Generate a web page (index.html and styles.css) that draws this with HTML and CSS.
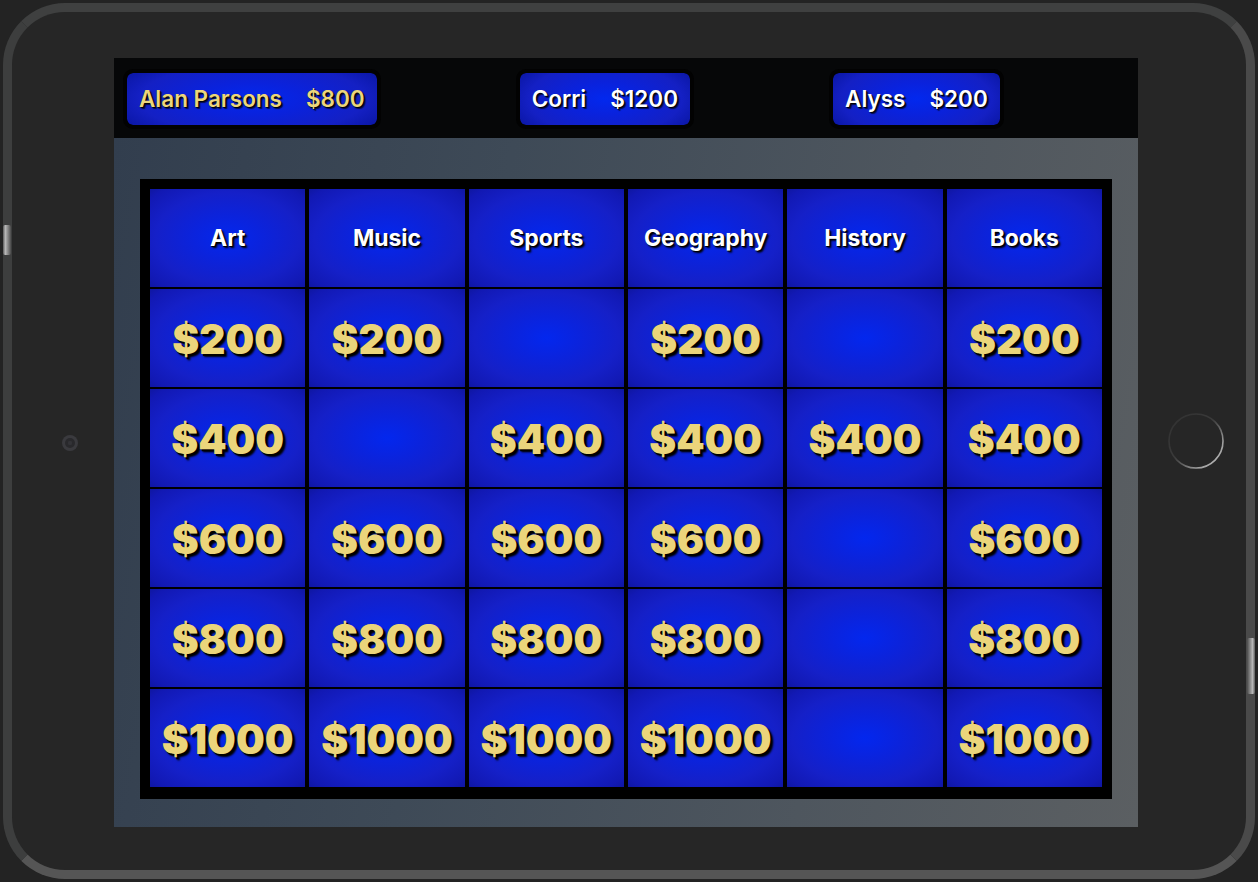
FILE: index.html
```html
<!DOCTYPE html>
<html lang="en">
<head>
<meta charset="utf-8">
<title>Jeopardy Board</title>
<link rel="stylesheet" href="styles.css">
</head>
<body>
<div class="device">
  <span class="side-btn side-btn-left"></span>
  <span class="side-btn side-btn-right"></span>
  <div class="bezel bezel-left">
    <svg class="camera" width="18" height="18" viewBox="0 0 18 18">
      <circle cx="9" cy="9" r="8" fill="#3a3a3e"/>
      <circle cx="9" cy="9" r="5" fill="#29292c"/>
      <circle cx="9" cy="9" r="2.2" fill="#333337"/>
    </svg>
  </div>
  <div class="screen">
    <div class="players">
      <div class="player active"><span class="pname">Alan Parsons</span><span class="pscore">$800</span></div>
      <div class="player"><span class="pname">Corri</span><span class="pscore">$1200</span></div>
      <div class="player"><span class="pname">Alyss</span><span class="pscore">$200</span></div>
    </div>
    <div class="stage">
      <div class="board">
        <div class="cell cat">Art</div>
        <div class="cell cat">Music</div>
        <div class="cell cat">Sports</div>
        <div class="cell cat">Geography</div>
        <div class="cell cat">History</div>
        <div class="cell cat">Books</div>

        <div class="cell money">$200</div>
        <div class="cell money">$200</div>
        <div class="cell money"></div>
        <div class="cell money">$200</div>
        <div class="cell money"></div>
        <div class="cell money">$200</div>

        <div class="cell money">$400</div>
        <div class="cell money"></div>
        <div class="cell money">$400</div>
        <div class="cell money">$400</div>
        <div class="cell money">$400</div>
        <div class="cell money">$400</div>

        <div class="cell money">$600</div>
        <div class="cell money">$600</div>
        <div class="cell money">$600</div>
        <div class="cell money">$600</div>
        <div class="cell money"></div>
        <div class="cell money">$600</div>

        <div class="cell money">$800</div>
        <div class="cell money">$800</div>
        <div class="cell money">$800</div>
        <div class="cell money">$800</div>
        <div class="cell money"></div>
        <div class="cell money">$800</div>

        <div class="cell money">$1000</div>
        <div class="cell money">$1000</div>
        <div class="cell money">$1000</div>
        <div class="cell money">$1000</div>
        <div class="cell money"></div>
        <div class="cell money">$1000</div>
      </div>
    </div>
  </div>
  <div class="bezel bezel-right">
    <svg class="home" width="60" height="60" viewBox="0 0 60 60">
      <defs>
        <linearGradient id="hg" x1="0" y1="0" x2="1" y2="1">
          <stop offset="0" stop-color="#8a8a8a" stop-opacity="0.1"/>
          <stop offset="0.45" stop-color="#8a8a8a" stop-opacity="0.2"/>
          <stop offset="0.75" stop-color="#b0b0b0" stop-opacity="0.85"/>
          <stop offset="1" stop-color="#c8c8c8" stop-opacity="1"/>
        </linearGradient>
      </defs>
      <circle cx="30" cy="30" r="27" fill="none" stroke="url(#hg)" stroke-width="1.6"/>
    </svg>
  </div>
</div>
</body>
</html>
```

FILE: styles.css
```css
* { box-sizing: border-box; }

html, body {
  margin: 0;
  padding: 0;
  background: #232323;
  width: 1258px;
  height: 882px;
  overflow: hidden;
}

.device {
  position: relative;
  width: 1252px;
  height: 876px;
  margin: 3px 0 0 3px;
  border: 9px solid #454646;
  border-top-color: #3f4040;
  border-left-color: #3d3e3e;
  border-bottom-color: #555555;
  border-right-color: #4a4a4a;
  border-radius: 62px;
  background: #262626;
  display: flex;
  align-items: center;
  padding-top: 3px;
}

.side-btn {
  position: absolute;
  width: 8px;
  border-radius: 2px;
}
.side-btn-left {
  left: -9px;
  top: 213px;
  height: 30px;
  background: linear-gradient(90deg, #5a5a5a, #b8b8b8 30%, #7a7a7a 70%, #4a4a4a);
}
.side-btn-right {
  right: -9px;
  top: 626px;
  height: 56px;
  background: linear-gradient(90deg, #4a4a4a, #7a7a7a 30%, #b8b8b8 70%, #5a5a5a);
}

.bezel {
  flex: none;
  display: flex;
  align-items: center;
  justify-content: center;
}
.bezel-left { width: 102px; padding-left: 14px; }
.bezel-right { width: 106px; padding-left: 10px; padding-bottom: 4px; }

.screen {
  width: 1024px;
  height: 769px;
  flex: none;
  display: flex;
  flex-direction: column;
}

.players {
  height: 80px;
  background: #060708;
  display: flex;
  align-items: center;
  padding-left: 9px;
  gap: 135px;
  padding-top: 1px;
}

.player {
  display: flex;
  align-items: center;
  gap: 24px;
  height: 60px;
  padding: 0 12px 0 12px;
  border: 4px solid #020202;
  border-radius: 10px;
  background: radial-gradient(ellipse 60% 90% at 50% 50%, #0228ee 0%, #0a22dc 35%, #1420c4 75%, #0a16a4 100%);
  background-clip: padding-box;
  font-family: "Inter", "Liberation Sans", sans-serif;
  font-weight: 600;
  font-size: 22.5px;
  color: #ffffff;
  text-shadow: 1px 1px 1px #000, 2px 2px 1px rgba(0,0,0,0.6);
  white-space: nowrap;
}
.player.active { color: #ecd67c; }

.stage {
  flex: 1;
  background: linear-gradient(100deg, #323e4e 0%, #3e4a57 35%, #4e565e 70%, #5b5f62 100%);
  padding: 41px 26px 28px 26px;
}

.board {
  background: #000;
  height: 620px;
  padding: 10px 10px 12px 10px;
  display: grid;
  grid-template-columns: repeat(6, 1fr);
  grid-template-rows: repeat(6, 98px);
  column-gap: 4px;
  row-gap: 2px;
}

.cell {
  display: flex;
  align-items: center;
  justify-content: center;
  background: radial-gradient(ellipse 75% 75% at 50% 50%, #0327ee 0%, #0b23dc 30%, #1520c8 62%, #1219b4 85%, #0d1596 100%);
  font-family: "Inter", "Liberation Sans", sans-serif;
  white-space: nowrap;
}

.cat {
  color: #ffffff;
  font-weight: 700;
  font-size: 23px;
  text-shadow: 2px 2px 2px #000, 1px 1px 0 #000;
  letter-spacing: -0.1px;
}

.money {
  color: #ebd57b;
  font-weight: 900;
  font-size: 40.5px;
  text-shadow: 3px 3px 2px #000, 2px 2px 0 #000;
  padding-top: 2px;
}
```
